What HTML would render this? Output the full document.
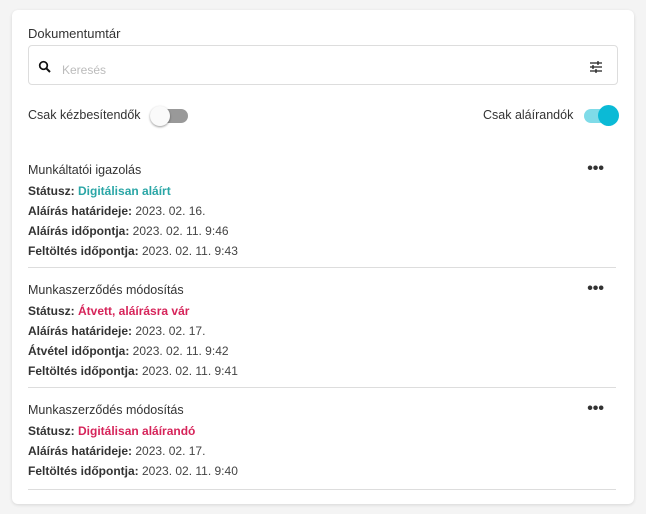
<!DOCTYPE html><html><head><meta charset="utf-8"><style>
body{margin:0;width:646px;height:514px;background:#f4f4f4;font-family:"Liberation Sans",sans-serif;color:#333;overflow:hidden}
.card{position:absolute;left:12px;top:10px;width:622px;height:494px;background:#fff;border-radius:6px;box-shadow:0 1px 3px rgba(0,0,0,.12)}
.abs{position:absolute}
.h{font-size:13px;color:#333}
.search{left:16px;top:35px;width:588px;height:38px;border:1px solid #ddd;border-radius:4px}
.row{font-size:12px;line-height:20px;color:#444}
b{font-weight:bold;color:#333}
.sec{position:absolute;left:16px;width:588px}
.sec .t{font-size:12.5px;height:22px;line-height:22px}
.dots{position:absolute;right:12px;top:1px;font-size:16px;font-weight:bold}
.div{position:absolute;left:16px;width:588px;height:1px;background:#ddd}
</style></head><body><div class="card">
<div class="abs h" style="left:16px;top:16px">Dokumentumtár</div>
<div class="abs search">
<svg class="abs" style="left:9px;top:14px" width="14" height="14" viewBox="0 0 14 14"><circle cx="5.5" cy="5.5" r="3.8" fill="none" stroke="#111" stroke-width="1.7"/><path d="M8.3 8.3L12 12" stroke="#111" stroke-width="2"/></svg>
<div class="abs" style="left:33px;top:17px;font-size:12px;color:#bbb">Keresés</div>
<svg class="abs" style="left:560px;top:14px" width="14" height="14" viewBox="0 0 14 14" stroke="#222" stroke-width="1.3"><path d="M1 3h12M1 7h12M1 11h12"/><path d="M9 1v4M4 5v4M7 9v4"/></svg>
</div>
<div class="abs h" style="left:16px;top:98px;font-size:12.5px">Csak kézbesítendők</div>
<div class="abs" style="left:142px;top:99px;width:34px;height:14px;border-radius:7px;background:#999"></div>
<div class="abs" style="left:138px;top:96px;width:20px;height:20px;border-radius:50%;background:#fafafa;box-shadow:0 1px 2px rgba(0,0,0,.4)"></div>
<div class="abs h" style="left:471px;top:98px;font-size:12.5px">Csak aláírandók</div>
<div class="abs" style="left:572px;top:99px;width:34px;height:14px;border-radius:7px;background:#7fdbe8"></div>
<div class="abs" style="left:586px;top:95px;width:21px;height:21px;border-radius:50%;background:#0bbad6"></div>

<div class="sec" style="top:149px"><div class="t">Munkáltatói igazolás</div><div class="dots">•••</div>
<div class="row"><b>Státusz: </b><span style="color:#2aa6a6;font-weight:bold">Digitálisan aláírt</span></div>
<div class="row"><b>Aláírás határideje:</b> 2023. 02. 16.</div>
<div class="row"><b>Aláírás időpontja:</b> 2023. 02. 11. 9:46</div>
<div class="row"><b>Feltöltés időpontja:</b> 2023. 02. 11. 9:43</div></div>
<div class="div" style="top:257px"></div>

<div class="sec" style="top:269px"><div class="t">Munkaszerződés módosítás</div><div class="dots">•••</div>
<div class="row"><b>Státusz: </b><span style="color:#d6245a;font-weight:bold">Átvett, aláírásra vár</span></div>
<div class="row"><b>Aláírás határideje:</b> 2023. 02. 17.</div>
<div class="row"><b>Átvétel időpontja:</b> 2023. 02. 11. 9:42</div>
<div class="row"><b>Feltöltés időpontja:</b> 2023. 02. 11. 9:41</div></div>
<div class="div" style="top:377px"></div>

<div class="sec" style="top:389px"><div class="t">Munkaszerződés módosítás</div><div class="dots">•••</div>
<div class="row"><b>Státusz: </b><span style="color:#d6245a;font-weight:bold">Digitálisan aláírandó</span></div>
<div class="row"><b>Aláírás határideje:</b> 2023. 02. 17.</div>
<div class="row"><b>Feltöltés időpontja:</b> 2023. 02. 11. 9:40</div></div>
<div class="div" style="top:479px"></div>
</div></body></html>
